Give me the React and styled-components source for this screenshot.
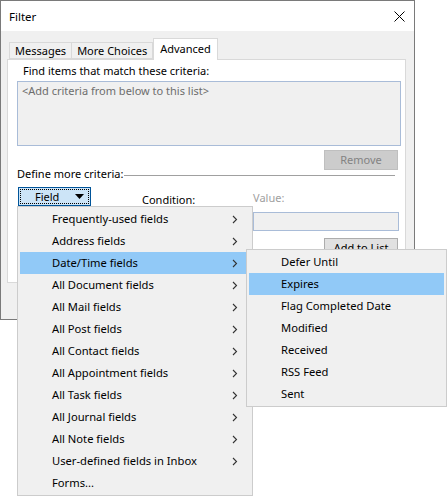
import React from "react";
import styled, { createGlobalStyle } from "styled-components";

const Global = createGlobalStyle`
  html, body { margin: 0; padding: 0; background: #ffffff; }
  body { font-family: "Segoe UI", "Noto Sans", "Open Sans", sans-serif; font-size: 11px; color: #000; }
  * { box-sizing: border-box; }
`;

const Stage = styled.div`
  position: relative;
  width: 447px;
  height: 497px;
  overflow: hidden;
`;

const Dialog = styled.div`
  width: 415px;
  height: 320px;
  border: 1px solid #7a7a7a;
  display: flex;
  flex-direction: column;
  background: #f0f0f0;
`;

const TitleBar = styled.div`
  height: 30px;
  background: #ffffff;
  display: flex;
  align-items: center;
  justify-content: space-between;
  padding: 0 9px 0 8px;
  font-size: 11.5px;
`;

const Body = styled.div`
  flex: 1;
  padding: 7px 8px 0 6px;
  display: flex;
  flex-direction: column;
`;

const TabRow = styled.div`
  display: flex;
  align-items: flex-end;
  margin-left: 2px;
  height: 21px;
  position: relative;
  z-index: 1;
`;

const Tab = styled.div`
  height: ${(p) => (p.$active ? "22px" : "17px")};
  padding: 0 ${(p) => (p.$active ? "6px" : "5px")};
  border: 1px solid #d9d9d9;
  border-bottom: ${(p) => (p.$active ? "none" : "1px solid #d9d9d9")};
  border-left: ${(p) => (p.$first || p.$active ? "1px solid #d9d9d9" : "none")};
  background: ${(p) => (p.$active ? "#ffffff" : "#f0f0f0")};
  margin-bottom: ${(p) => (p.$active ? "-1px" : "0")};
  display: flex;
  align-items: ${(p) => (p.$active ? "flex-start" : "center")};
  padding-top: ${(p) => (p.$active ? "2px" : "0")};
  line-height: 15px;
  white-space: nowrap;
`;

const Panel = styled.div`
  width: 399px;
  height: 224px;
  background: #ffffff;
  border: 1px solid #d9d9d9;
  display: flex;
  flex-direction: column;
`;

const Label = styled.div`
  height: ${(p) => p.$h || 16}px;
  line-height: ${(p) => p.$h || 16}px;
  margin-top: ${(p) => p.$mt || 0}px;
  padding-left: ${(p) => p.$pl || 0}px;
  color: ${(p) => (p.$muted ? "#a0a0a0" : "#000")};
  white-space: nowrap;
`;

const ListBox = styled.div`
  margin: 2px 0 0 9px;
  width: 384px;
  height: 65px;
  border: 1px solid #a9bcd8;
  background: #f0f0f0;
  padding: 1px 4px;
  color: #6d6d6d;
  line-height: 15px;
`;

const ButtonRow = styled.div`
  display: flex;
  justify-content: flex-end;
  margin-top: 4px;
  padding-right: 7px;
`;

const PushButton = styled.div`
  width: 74px;
  height: 20px;
  border: 1px solid ${(p) => (p.$disabled ? "#bfbfbf" : "#adadad")};
  background: ${(p) => (p.$disabled ? "#cccccc" : "#e1e1e1")};
  color: ${(p) => (p.$disabled ? "#838383" : "#000")};
  display: flex;
  align-items: center;
  justify-content: center;
  line-height: 16px;
  align-self: ${(p) => p.$align || "auto"};
  margin-top: ${(p) => p.$mt || 0}px;
  margin-right: ${(p) => p.$mr || 0}px;
`;

const GroupHeader = styled.div`
  display: flex;
  align-items: center;
  gap: 1px;
  height: 14px;
  margin-top: -3px;
  padding-left: 9px;
  padding-right: 10px;
  line-height: 14px;
  white-space: nowrap;
`;

const Rule = styled.div`
  flex: 1;
  height: 1px;
  background: #a0a0a0;
  margin-top: 2px;
`;

const CriteriaGrid = styled.div`
  display: grid;
  grid-template-columns: 124px 111px 146px;
  margin-top: 6px;
  padding-left: 10px;
`;

const Column = styled.div`
  display: flex;
  flex-direction: column;
`;

const FieldButton = styled.div`
  width: 73px;
  height: 19px;
  border: 1px solid #005499;
  background: #cce4f7;
  padding: 1px;
`;

const FocusRect = styled.div`
  height: 100%;
  border: 1px dotted #000;
  display: flex;
  align-items: center;
  padding: 0 4px 0 14px;
  justify-content: space-between;
  line-height: 14px;
`;

const TextInput = styled.div`
  margin-top: 6px;
  height: 19px;
  border: 1px solid #a9bcd8;
  background: #f0f0f0;
`;

const Menu = styled.div`
  position: absolute;
  left: ${(p) => p.$x}px;
  top: ${(p) => p.$y}px;
  width: ${(p) => p.$w}px;
  background: #f0f0f0;
  border: 1px solid #cccccc;
  padding: 1px 2px;
  display: flex;
  flex-direction: column;
  z-index: 5;
  font-size: 11.2px;
`;

const MenuItem = styled.div`
  height: 22px;
  display: flex;
  align-items: center;
  justify-content: space-between;
  padding: 0 12px 0 32px;
  background: ${(p) => (p.$hot ? "#91c9f7" : "transparent")};
  white-space: nowrap;
  line-height: 16px;
`;

const Chevron = () => (
  <svg width="6" height="9" viewBox="0 0 6 9">
    <polyline points="1,1 4.5,4.5 1,8" fill="none" stroke="#333" strokeWidth="1.1" />
  </svg>
);

const mainItems = [
  ["Frequently-used fields", true],
  ["Address fields", true],
  ["Date/Time fields", true, true],
  ["All Document fields", true],
  ["All Mail fields", true],
  ["All Post fields", true],
  ["All Contact fields", true],
  ["All Appointment fields", true],
  ["All Task fields", true],
  ["All Journal fields", true],
  ["All Note fields", true],
  ["User-defined fields in Inbox", true],
  ["Forms...", false],
];

const subItems = ["Defer Until", "Expires", "Flag Completed Date", "Modified", "Received", "RSS Feed", "Sent"];

export default function App() {
  return (
    <Stage>
      <Global />
      <Dialog>
        <TitleBar>
          <span>Filter</span>
          <svg width="11" height="11" viewBox="0 0 11 11">
            <path d="M0.5 0.5 L10.5 10.5 M10.5 0.5 L0.5 10.5" stroke="#000" strokeWidth="1" />
          </svg>
        </TitleBar>
        <Body>
          <TabRow>
            <Tab $first>Messages</Tab>
            <Tab>More Choices</Tab>
            <Tab $active>Advanced</Tab>
          </TabRow>
          <Panel>
            <Label $mt={3} $pl={15}>Find items that match these criteria:</Label>
            <ListBox>&lt;Add criteria from below to this list&gt;</ListBox>
            <ButtonRow>
              <PushButton $disabled>Remove</PushButton>
            </ButtonRow>
            <GroupHeader>
              <span>Define more criteria:</span>
              <Rule />
            </GroupHeader>
            <CriteriaGrid>
              <Column>
                <FieldButton>
                  <FocusRect>
                    <span>Field</span>
                    <svg width="9" height="5" viewBox="0 0 9 5">
                      <polygon points="0,0 9,0 4.5,5" fill="#000" />
                    </svg>
                  </FocusRect>
                </FieldButton>
              </Column>
              <Column>
                <Label $mt={5}>Condition:</Label>
              </Column>
              <Column>
                <Label $mt={3} $muted>Value:</Label>
                <TextInput />
                <PushButton $align="flex-end" $mt={7} $mr={1}>Add to List</PushButton>
              </Column>
            </CriteriaGrid>
          </Panel>
        </Body>
      </Dialog>

      <Menu $x={17} $y={206} $w={236}>
        {mainItems.map(([label, arrow, hot]) => (
          <MenuItem key={label} $hot={hot}>
            <span>{label}</span>
            {arrow && <Chevron />}
          </MenuItem>
        ))}
      </Menu>

      <Menu $x={246} $y={249} $w={201}>
        {subItems.map((label) => (
          <MenuItem key={label} $hot={label === "Expires"}>
            <span>{label}</span>
          </MenuItem>
        ))}
      </Menu>
    </Stage>
  );
}
